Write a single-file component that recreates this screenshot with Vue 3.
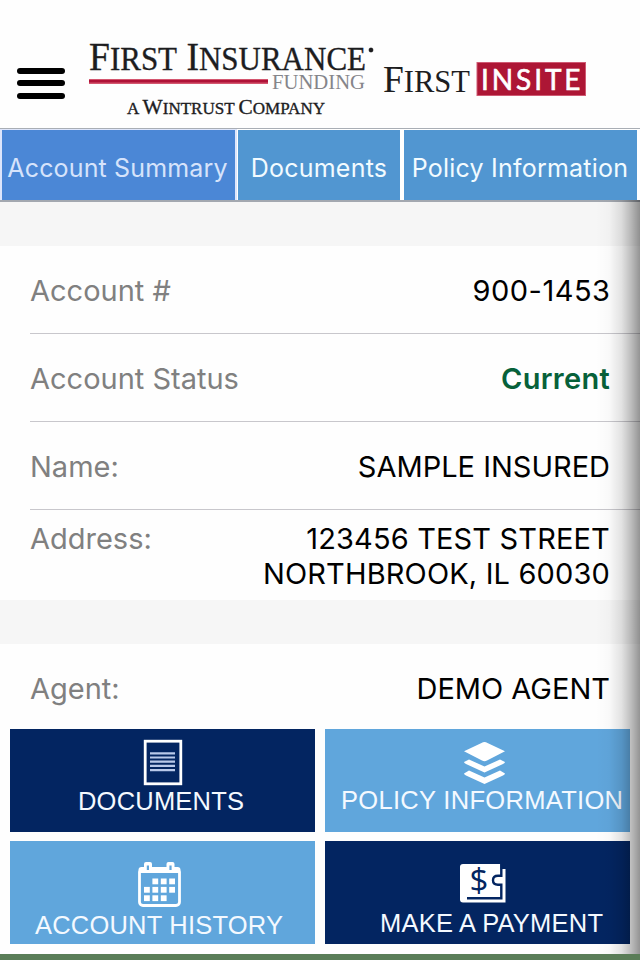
<template>
  <div class="app-page">
    <header class="app-header">
      <button class="menu-button" type="button" aria-label="Menu">
        <span></span>
        <span></span>
        <span></span>
      </button>
      <svg class="brand" width="510" height="100" viewBox="84 20 510 100">
        <g class="serif">
          <text x="89" y="70" font-size="40" textLength="277" lengthAdjust="spacingAndGlyphs">F<tspan font-size="33">IRST</tspan> I<tspan font-size="33">NSURANCE</tspan></text>
          <circle cx="371" cy="50" r="2.2" />
          <rect x="89" y="79" width="179" height="5" fill="#d4566f" stroke="none" />
          <rect x="89" y="80" width="179" height="2.5" fill="#b01238" stroke="none" />
          <text class="funding" x="272" y="89" font-size="21" textLength="93" lengthAdjust="spacingAndGlyphs">FUNDING</text>
          <text x="127" y="113.500" font-size="16" textLength="198" lengthAdjust="spacingAndGlyphs">A <tspan font-size="20">W</tspan>INTRUST <tspan font-size="20">C</tspan>OMPANY</text>
          <text class="thin" x="383" y="92" font-size="38" textLength="87" lengthAdjust="spacingAndGlyphs">F<tspan font-size="31">IRST</tspan></text>
        </g>
        <rect x="477" y="62.500" width="108.500" height="33" fill="#ad1635" stroke="#cf5a73" />
        <text class="insite" x="481" y="89.500" textLength="99.500" lengthAdjust="spacing">INSITE</text>
      </svg>
    </header>

    <nav class="tabs">
      <a
        v-for="tab in tabs"
        :key="tab.id"
        class="tab"
        :class="[tab.id, { active: tab.id === activeTab }]"
        @click="activeTab = tab.id"
      >{{ tab.label }}</a>
    </nav>

    <main class="content">
      <section class="card">
        <div v-for="row in accountRows" :key="row.label" class="info-row" :class="row.type">
          <span class="info-label">{{ row.label }}</span>
          <span class="info-value">{{ row.value }}</span>
        </div>
      </section>

      <section class="card agent-card">
        <div class="info-row">
          <span class="info-label">Agent:</span>
          <span class="info-value">DEMO AGENT</span>
        </div>
      </section>

      <div class="tiles">
        <button class="tile dark" type="button">
          <svg width="305" height="103" viewBox="10 729 305 103">
            <rect x="145.200" y="741.200" width="35.600" height="42.600" fill="none" stroke="#fff" stroke-width="2.800" />
            <path d="M150 753.300h25M150 757.500h25M150 761.700h25M150 765.900h25M150 770.100h25" stroke="#b9c9ea" stroke-width="2.200" />
            <text x="78" y="810" textLength="166">DOCUMENTS</text>
          </svg>
        </button>
        <button class="tile light" type="button">
          <svg width="305" height="103" viewBox="325 729 305 103">
            <path d="M484.500 742Q486 742 487.500 743L505 751.300L487 760.500Q484.500 762 482 760.500L464 751.300L481.500 743Q483 742 484.500 742Z" />
            <path d="M464 762L469 759.500L484.500 766.500L500 759.500L505 762Q505 763 503 764L484.500 772.500L466 764Q464 763 464 762Z" />
            <path d="M464 773.500L469 770.500L484.500 777.500L500 770.500L505 773.500Q505 774.500 503 775.500L484.500 784L466 775.500Q464 774.500 464 773.500Z" />
            <text x="341" y="809" textLength="282">POLICY INFORMATION</text>
          </svg>
        </button>
        <button class="tile light" type="button">
          <svg width="305" height="103" viewBox="10 841 305 103">
            <rect x="139.500" y="869.500" width="40" height="36" rx="3.500" fill="none" stroke="#fff" stroke-width="2.800" />
            <path d="M138.500 873v-3q0-3 3-3h36q3 0 3 3v3z" />
            <path d="M144 870v-6q0-2 2-2h4q2 0 2 2v6zM166.500 870v-6q0-2 2-2h4q2 0 2 2v6z" />
            <path d="M146.800 865.500h2.200v4.500h-2.200zM169.400 865.500h2.200v4.500h-2.200z" fill="#60a6dc" />
            <rect
              v-for="cell in calendarCells"
              :key="cell.x + '-' + cell.y"
              :x="cell.x"
              :y="cell.y"
              width="5.800"
              height="5.800"
            />
            <text x="35" y="934" textLength="248">ACCOUNT HISTORY</text>
          </svg>
        </button>
        <button class="tile dark" type="button">
          <svg width="305" height="103" viewBox="325 841 305 103">
            <path d="M463 864H500.500V869H505.500V902.500H463Q460 902.500 460 899.500V867Q460 864 463 864Z" />
            <path d="M501.300 864V875.800H498Q493 875.800 493 880.300Q493 884.800 498 884.800H501.300V898.300H467" fill="none" stroke="#032561" stroke-width="2.400" />
            <text class="dollar" x="469.500" y="891.500">$</text>
            <text x="380" y="932" textLength="223">MAKE A PAYMENT</text>
          </svg>
        </button>
      </div>
      <div class="edge-shadow"></div>
    </main>
    <footer class="bottom-bar"></footer>
  </div>
</template>

<script setup>
import { ref } from 'vue'

const activeTab = ref('summary')

const tabs = [
  { id: 'summary', label: 'Account Summary' },
  { id: 'documents', label: 'Documents' },
  { id: 'policy', label: 'Policy Information' }
]

const accountRows = [
  { label: 'Account #', value: '900-1453', type: 'number' },
  { label: 'Account Status', value: 'Current', type: 'status' },
  { label: 'Name:', value: 'SAMPLE INSURED', type: 'name' },
  { label: 'Address:', value: '123456 TEST STREET\nNORTHBROOK, IL 60030', type: 'address' }
]

// First day starts in the second column, last row stops one short
const calendarCells = [
  [1, 2, 3],
  [0, 1, 2, 3],
  [0, 1, 2]
].flatMap((cols, row) => cols.map(col => ({ x: 144 + col * 8.4, y: 878.5 + row * 8.4 })))
</script>

<style>
body {
  margin: 0;
  background: #fff;
}
</style>

<style scoped>
.app-page {
  display: flex;
  flex-direction: column;
  width: 640px;
  height: 960px;
  overflow: hidden;
  background: #fefefe;
  font-family: Inter, "Liberation Sans", sans-serif;
}

button {
  border: 0;
  padding: 0;
  background: none;
}

.app-header {
  display: flex;
  flex: none;
  box-sizing: border-box;
  height: 129px;
  padding: 20px 0 0 17px;
  gap: 19px;
  border-bottom: 1px solid #a9aeb5;
}

.menu-button {
  display: flex;
  flex-direction: column;
  gap: 6.5px;
  width: 48px;
  height: 32px;
  margin-top: 47.5px;
}

.menu-button span {
  height: 6px;
  border-radius: 3px;
  background: #000;
}

.brand {
  display: block;
  flex: none;
}

.serif {
  font-family: "Liberation Serif", serif;
  fill: #1d1d1f;
  stroke: #1d1d1f;
  stroke-width: 0.35px;
}

.serif .funding {
  fill: #85858a;
  stroke: none;
}

.serif .thin {
  stroke: none;
}

.insite {
  font-family: Lato, sans-serif;
  font-size: 28px;
  fill: #fff;
  stroke: #fff;
  stroke-width: 0.6px;
}

.tabs {
  display: flex;
  flex: none;
  box-sizing: border-box;
  height: 73px;
  padding: 1px 0 0 2px;
  border-bottom: 2px solid #a3a8b0;
  background: linear-gradient(90deg, #dde5fb 237px, #fff 237px);
}

.tab {
  display: flex;
  flex: none;
  align-items: center;
  justify-content: center;
  box-sizing: border-box;
  width: 233px;
  padding-top: 6px;
  background: #5196d1;
  color: #f2fbff;
  font-size: 25px;
  letter-spacing: 0.22px;
  white-space: nowrap;
}

.tab.documents {
  width: 162px;
  margin: 0 4px 0 3px;
}

.tab.policy {
  padding-right: 1px;
}

.tab.active {
  padding-right: 2px;
  background: #4b87d6;
  color: #d6e3fb;
  letter-spacing: 0.15px;
}

.content {
  position: relative;
  flex: 1;
  padding-top: 44px;
  background: #f6f6f6;
}

.card {
  padding-left: 30px;
  background: #fefefe;
}

.agent-card {
  margin-top: 44px;
}

.info-row {
  display: flex;
  justify-content: space-between;
  box-sizing: border-box;
  height: 88px;
  padding: 27px 30px 0 0;
  border-bottom: 1px solid #c8c7cc;
  font-size: 29px;
  line-height: 35px;
}

.info-row.address {
  height: 90px;
  padding-top: 11px;
  border-bottom: 0;
}

.agent-card .info-row {
  height: 85px;
  border-bottom: 0;
}

.info-label {
  color: #808080;
}

.info-value {
  color: #000;
  text-align: right;
  white-space: pre-line;
}

.number .info-value {
  letter-spacing: 0.5px;
  margin-right: -0.5px;
}

.address .info-value {
  letter-spacing: 0.15px;
}

.status .info-value {
  color: #07613a;
  font-weight: 600;
  letter-spacing: 0.3px;
}

.tiles {
  display: grid;
  grid-template-columns: 305px 305px;
  gap: 9px 10px;
  padding: 0 10px 10px;
  background: #fefefe;
}

.tile {
  height: 103px;
}

.tile svg {
  display: block;
  fill: #fff;
}

.tile text {
  font-family: "Liberation Sans", sans-serif;
  font-size: 25.5px;
  fill: #f4f9ff;
}

.tile .dollar {
  font-family: "Open Sans", sans-serif;
  font-size: 33px;
  font-weight: 500;
  fill: #032561;
}

.dark {
  background: #032561;
}

.light {
  background: #60a6dc;
}

.edge-shadow {
  position: absolute;
  top: -2px;
  right: 0;
  bottom: 0;
  width: 44px;
  background: linear-gradient(90deg, rgba(0, 0, 0, 0), rgba(0, 0, 0, 0.02) 30%, rgba(0, 0, 0, 0.11) 58%, rgba(0, 0, 0, 0.26) 80%, rgba(0, 0, 0, 0.42));
  pointer-events: none;
}

.bottom-bar {
  flex: none;
  height: 6px;
  background: #5a7d58;
}
</style>
